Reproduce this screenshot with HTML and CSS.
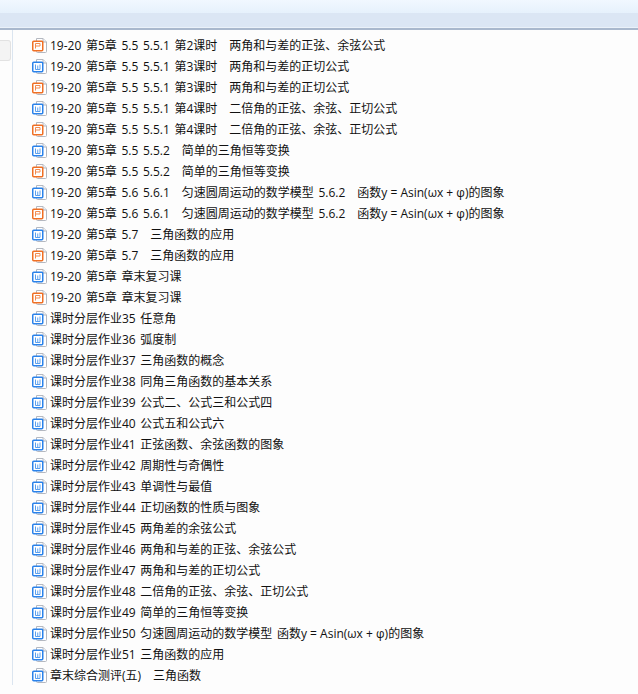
FILE: index.html
```html
<!DOCTYPE html>
<html lang="zh">
<head>
<meta charset="utf-8">
<title>文件列表</title>
<link rel="stylesheet" href="styles.css">
</head>
<body>
<svg class="defs" width="0" height="0">
  <symbol id="doc" viewBox="0 0 15 15">
    <path d="M4.500 .5H11L14.500 4V13.500A1 1 0 0 1 13.500 14.500H5.500A1 1 0 0 1 4.500 13.500Z" fill="#fff" stroke="#b4b8c0"/>
    <path d="M11 .5V4H14.500" fill="#eef0f4" stroke="#b4b8c0"/>
  </symbol>
  <symbol id="ppt" viewBox="0 0 15 15">
    <use href="#doc" width="15" height="15"/>
    <rect x=".75" y="3.250" width="10" height="9.500" rx="1" fill="#fff" stroke="#ef6f24" stroke-width="1.500"/>
    <path d="M3.500 10.500V5.500H8V8H3.500" fill="none" stroke="#f28a50" stroke-width="1"/>
  </symbol>
  <symbol id="word" viewBox="0 0 15 15">
    <use href="#doc" width="15" height="15"/>
    <rect x=".75" y="3.250" width="10" height="9.500" rx="1" fill="#fff" stroke="#2a82ea" stroke-width="1.500"/>
    <path d="M3.500 5.500V10.500H8V5.500M5.750 6.500V10" fill="none" stroke="#5a9fee" stroke-width="1"/>
  </symbol>
</svg>
<header class="topbar"><div class="topbar-light"></div><div class="topbar-band"></div></header>
<div class="main">
  <aside class="side"><div class="side-btn"></div></aside>
  <ul class="files">
    <li class="file"><svg class="ico"><use href="#ppt"/></svg><span>19-20 第5章 5.5 5.5.1 第2课时　两角和与差的正弦、余弦公式</span></li>
    <li class="file"><svg class="ico"><use href="#word"/></svg><span>19-20 第5章 5.5 5.5.1 第3课时　两角和与差的正切公式</span></li>
    <li class="file"><svg class="ico"><use href="#ppt"/></svg><span>19-20 第5章 5.5 5.5.1 第3课时　两角和与差的正切公式</span></li>
    <li class="file"><svg class="ico"><use href="#word"/></svg><span>19-20 第5章 5.5 5.5.1 第4课时　二倍角的正弦、余弦、正切公式</span></li>
    <li class="file"><svg class="ico"><use href="#ppt"/></svg><span>19-20 第5章 5.5 5.5.1 第4课时　二倍角的正弦、余弦、正切公式</span></li>
    <li class="file"><svg class="ico"><use href="#word"/></svg><span>19-20 第5章 5.5 5.5.2　简单的三角恒等变换</span></li>
    <li class="file"><svg class="ico"><use href="#ppt"/></svg><span>19-20 第5章 5.5 5.5.2　简单的三角恒等变换</span></li>
    <li class="file"><svg class="ico"><use href="#word"/></svg><span>19-20 第5章 5.6 5.6.1　匀速圆周运动的数学模型 5.6.2　函数<span class="formula">y = Asin(ωx + φ)</span>的图象</span></li>
    <li class="file"><svg class="ico"><use href="#ppt"/></svg><span>19-20 第5章 5.6 5.6.1　匀速圆周运动的数学模型 5.6.2　函数<span class="formula">y = Asin(ωx + φ)</span>的图象</span></li>
    <li class="file"><svg class="ico"><use href="#word"/></svg><span>19-20 第5章 5.7　三角函数的应用</span></li>
    <li class="file"><svg class="ico"><use href="#ppt"/></svg><span>19-20 第5章 5.7　三角函数的应用</span></li>
    <li class="file"><svg class="ico"><use href="#word"/></svg><span>19-20 第5章 章末复习课</span></li>
    <li class="file"><svg class="ico"><use href="#ppt"/></svg><span>19-20 第5章 章末复习课</span></li>
    <li class="file"><svg class="ico"><use href="#word"/></svg><span>课时分层作业35 任意角</span></li>
    <li class="file"><svg class="ico"><use href="#word"/></svg><span>课时分层作业36 弧度制</span></li>
    <li class="file"><svg class="ico"><use href="#word"/></svg><span>课时分层作业37 三角函数的概念</span></li>
    <li class="file"><svg class="ico"><use href="#word"/></svg><span>课时分层作业38 同角三角函数的基本关系</span></li>
    <li class="file"><svg class="ico"><use href="#word"/></svg><span>课时分层作业39 公式二、公式三和公式四</span></li>
    <li class="file"><svg class="ico"><use href="#word"/></svg><span>课时分层作业40 公式五和公式六</span></li>
    <li class="file"><svg class="ico"><use href="#word"/></svg><span>课时分层作业41 正弦函数、余弦函数的图象</span></li>
    <li class="file"><svg class="ico"><use href="#word"/></svg><span>课时分层作业42 周期性与奇偶性</span></li>
    <li class="file"><svg class="ico"><use href="#word"/></svg><span>课时分层作业43 单调性与最值</span></li>
    <li class="file"><svg class="ico"><use href="#word"/></svg><span>课时分层作业44 正切函数的性质与图象</span></li>
    <li class="file"><svg class="ico"><use href="#word"/></svg><span>课时分层作业45 两角差的余弦公式</span></li>
    <li class="file"><svg class="ico"><use href="#word"/></svg><span>课时分层作业46 两角和与差的正弦、余弦公式</span></li>
    <li class="file"><svg class="ico"><use href="#word"/></svg><span>课时分层作业47 两角和与差的正切公式</span></li>
    <li class="file"><svg class="ico"><use href="#word"/></svg><span>课时分层作业48 二倍角的正弦、余弦、正切公式</span></li>
    <li class="file"><svg class="ico"><use href="#word"/></svg><span>课时分层作业49 简单的三角恒等变换</span></li>
    <li class="file"><svg class="ico"><use href="#word"/></svg><span>课时分层作业50 匀速圆周运动的数学模型 函数<span class="formula">y = Asin(ωx + φ)</span>的图象</span></li>
    <li class="file"><svg class="ico"><use href="#word"/></svg><span>课时分层作业51 三角函数的应用</span></li>
    <li class="file"><svg class="ico"><use href="#word"/></svg><span>章末综合测评(五)　三角函数</span></li>
  </ul>
</div>
</body>
</html>
```
FILE: styles.css
```css
html, body {
  margin: 0;
  padding: 0;
  height: 100%;
  overflow: hidden;
  background: #fdfdfd;
  color: #111;
  font-family: "Open Sans", "Noto Sans CJK SC", sans-serif;
  font-size: 12px;
  word-spacing: 1.5px;
}
.defs { display: block; height: 0; }
.topbar { border-bottom: 2px solid #a9b8cd; }
.topbar-light { height: 13px; background: linear-gradient(#f1f8ff, #e6f1fc); }
.topbar-band {
  height: 15px;
  background: linear-gradient(#dbe6f4 92%, #eaf1f9 92%);
}
.main { display: flex; }
.side {
  width: 13px;
  flex: none;
  box-sizing: border-box;
  padding-top: 10px;
  border-right: 1px solid #dbe5f0;
}
.side-btn {
  width: 11px;
  height: 21px;
  background: #f4f4f4;
  border: 1px solid #e2e2e2;
  border-left: 0;
  border-radius: 0 3px 3px 0;
  box-sizing: border-box;
}
.files {
  list-style: none;
  margin: 0;
  padding: 4px 0 0 19px;
}
.file {
  display: flex;
  align-items: center;
  gap: 3px;
  height: 21px;
  white-space: nowrap;
}
.formula { word-spacing: 0; }
.ico {
  width: 15px;
  height: 15px;
  flex: none;
  align-self: flex-start;
  margin-top: 4px;
}
```
